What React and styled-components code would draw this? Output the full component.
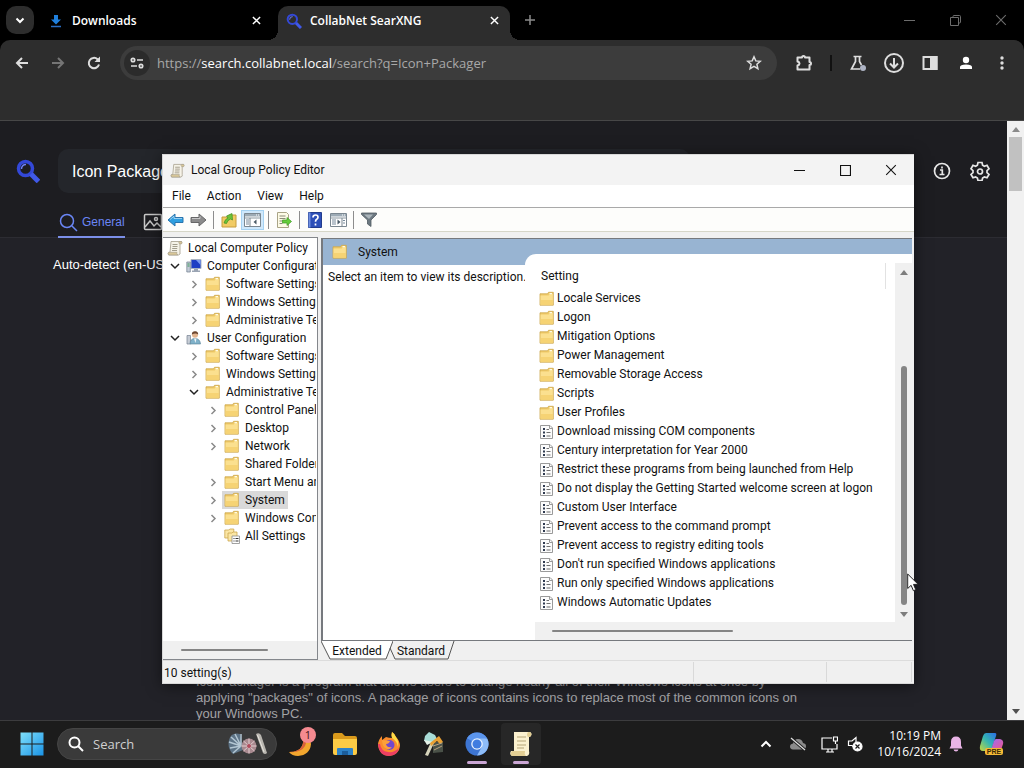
import React from "react";
import styled, { createGlobalStyle, css } from "styled-components";

const UI = `"Open Sans", "Noto Sans", sans-serif`;
const NARROW = `Roboto, "Open Sans", sans-serif`;
const WEB = `"Liberation Sans", Arial, sans-serif`;

const GlobalStyle = createGlobalStyle`
  * { box-sizing: border-box; }
  html, body, #root { height: 100%; }
  body { margin: 0; background: #000; font: 12px/16px ${UI}; overflow: hidden; }
  button, input { font: inherit; color: inherit; border: 0; background: none; padding: 0; margin: 0; outline: 0; }
  ul { list-style: none; margin: 0; padding: 0; }
  svg { display: block; flex: none; }
  p, h1, h2 { margin: 0; font: inherit; }
`;

const Desktop = styled.div`
  position: relative;
  display: flex;
  flex-direction: column;
  height: 100vh;
  overflow: hidden;
`;

/* ---------- browser chrome ---------- */

const TabStrip = styled.div`
  display: flex;
  height: 40px;
  padding-left: 6px;
  background: #000;
  color: #fff;
`;

const TabSearch = styled.button`
  display: grid;
  place-items: center;
  width: 28px;
  height: 28px;
  margin: 6px 8px 0 0;
  border-radius: 10px;
  background: #2d2d2d;
`;

const Tab = styled.div`
  position: relative;
  display: flex;
  align-items: center;
  gap: ${(p) => (p.$active ? 8 : 10)}px;
  width: ${(p) => (p.$active ? 232 : 236)}px;
  height: 34px;
  margin-top: 6px;
  padding: ${(p) => (p.$active ? "0 8px 5px" : "0 14px 5px 8px")};
  border-radius: 10px 10px 0 0;
  font-weight: 600;
  ${(p) =>
    p.$active &&
    css`
      background: #2d2d2d;
      &::before,
      &::after {
        content: "";
        position: absolute;
        bottom: 0;
        width: 10px;
        height: 10px;
      }
      &::before {
        right: 100%;
        background: radial-gradient(circle at 0 0, transparent 10px, #2d2d2d 10px);
      }
      &::after {
        left: 100%;
        background: radial-gradient(circle at 100% 0, transparent 10px, #2d2d2d 10px);
      }
    `}
`;

const TabTitle = styled.span`
  flex: 1;
  white-space: nowrap;
`;

const SmallButton = styled.button`
  display: grid;
  place-items: center;
  width: 16px;
  height: 16px;
`;

const NewTab = styled(SmallButton)`
  width: 28px;
  height: 28px;
  margin: 6px auto 0 6px;
  color: #8a8a8a;
`;

const CaptionButton = styled.button`
  display: grid;
  place-items: center;
  width: 46px;
  height: 100%;
`;

const CaptionGroup = styled.div`
  display: flex;
  height: 100%;
  color: ${(p) => p.$color};
`;

const BrowserBar = styled.div`
  background: #000;
`;

const BrowserToolbar = styled.div`
  display: flex;
  align-items: center;
  height: 46px;
  padding: 0 4px;
  border-radius: 10px 10px 0 0;
  background: #2d2d2d;
  color: #dedede;
`;

const ToolButton = styled.button`
  display: grid;
  place-items: center;
  width: 36px;
  height: 34px;
  color: ${(p) => (p.$dim ? "#757575" : "inherit")};
`;

const BarDivider = styled.span`
  width: 2px;
  height: 16px;
  margin: 0 8px;
  background: #111;
`;

const AddressBar = styled.div`
  display: flex;
  flex: 1;
  align-items: center;
  gap: 7px;
  height: 34px;
  margin: 0 9px 0 8px;
  padding: 0 15px 0 4px;
  border-radius: 17px;
  background: #3c3c3c;
`;

const SiteInfo = styled.button`
  display: grid;
  place-items: center;
  width: 26px;
  height: 26px;
  border-radius: 13px;
  background: #2b2b2b;
`;

const Address = styled.div`
  flex: 1;
  font-size: 13px;
  line-height: 20px;
  color: #a8a8a8;
  white-space: nowrap;
  outline: 0;
  strong { font-weight: 400; color: #fff; }
`;

const BookmarkBar = styled.div`
  height: 35px;
  background: #2d2d2d;
  border-bottom: 1px solid #474747;
`;

/* ---------- web page ---------- */

const Viewport = styled.div`
  display: flex;
  flex: 1;
  min-height: 0;
`;

const WebPage = styled.main`
  display: flex;
  flex: 1;
  flex-direction: column;
  min-width: 0;
  background: #222228;
  color: #fff;
  font-family: ${WEB};
`;

const PageHeader = styled.header`
  background: #1d1d21;
  border-bottom: 1px solid #2c2c32;
`;

const SearchRow = styled.div`
  display: flex;
  align-items: center;
  padding: 28px 17px 0 16px;
`;

const QueryInput = styled.input`
  flex: 0 1 632px;
  min-width: 0;
  height: 44px;
  margin: 0 auto 0 18px;
  padding: 1px 14px 0;
  border-radius: 10px;
  background: #24262b;
  color: #fff;
  font: 16px/20px ${WEB};
`;

const HeaderLink = styled.a`
  margin-left: 18px;
  color: #e6e6e6;
`;

const Categories = styled.nav`
  display: flex;
  gap: 18px;
  height: 44px;
  padding: 14px 0 0 58px;
`;

const Category = styled.a`
  display: flex;
  align-items: center;
  gap: 4px;
  height: 31px;
  color: ${(p) => (p.$active ? "#6a86f5" : "#c8c8c8")};
  border-bottom: 2px solid ${(p) => (p.$active ? "#7b8fe8" : "transparent")};
  font-size: 12px;
  text-decoration: none;
`;

const Filters = styled.div`
  flex: 1;
  padding: 17px 53px;
  font-size: 13px;
  line-height: 20px;
`;

const Result = styled.p`
  width: 620px;
  margin: 0 0 -2px 196px;
  color: #a3a3a6;
  font-size: 13px;
  line-height: 16px;
  white-space: nowrap;
`;

const PageScroll = styled.div`
  display: flex;
  flex-direction: column;
  align-items: center;
  width: 17px;
  padding: 6px 0;
  background: #f1f1f1;
`;

const PageThumb = styled.span`
  flex: none;
  width: 13px;
  height: 54px;
  margin: 5px 0 auto;
  background: #c1c1c1;
`;

const Triangle = styled.span`
  border: 4px solid transparent;
  border-${(p) => (p.$down ? "top" : "bottom")}: 5px solid ${(p) => p.$color};
  border-${(p) => (p.$down ? "bottom" : "top")}: 0;
`;

/* ---------- policy editor window ---------- */

const Window = styled.section`
  position: absolute;
  left: 162px;
  top: 154px;
  display: flex;
  flex-direction: column;
  width: 752px;
  height: 530px;
  border: 1px solid #d8d8d8;
  border-right-width: 0;
  background: #f0f0f0;
  color: #111;
  font-family: ${NARROW};
  box-shadow: 0 2px 14px rgba(0, 0, 0, 0.5);
`;

const TitleBar = styled.header`
  display: flex;
  align-items: center;
  gap: 6px;
  height: 30px;
  padding-left: 7px;
  background: #f3f3f3;
`;

const Title = styled.h1`
  flex: 1;
`;

const MenuBar = styled.nav`
  display: flex;
  gap: 16px;
  height: 23px;
  padding-left: 9px;
  background: #fff;
  border-bottom: 1px solid #a9a9a9;
`;

const IconBar = styled.div`
  display: flex;
  align-items: center;
  gap: 5px;
  height: 24px;
  padding-left: 3px;
  background: #fdfdfb;
  border-bottom: 1px solid #d6d6c8;
`;

const IconButton = styled.button`
  display: grid;
  place-items: center;
  width: 18px;
  height: 20px;
  ${(p) =>
    p.$on &&
    css`
      width: 23px;
      margin: 0 -2px;
      background: #cfe8fb;
      border: 1px solid #a5d2f2;
    `}
`;

const IconDivider = styled.span`
  width: 1px;
  height: 18px;
  margin: 0 1px;
  background: #8d8d8d;
`;

const Panes = styled.div`
  display: flex;
  flex: 1;
  gap: 3px;
  min-height: 0;
  padding: 5px 2px 0 0;
`;

const TreePane = styled.div`
  display: flex;
  flex-direction: column;
  width: 155px;
  border: 1px solid #84878c;
  border-left: 0;
  background: #fff;
`;

const Tree = styled.ul`
  flex: 1;
  min-height: 0;
  margin-right: 1px;
  padding-top: 1px;
  overflow: hidden;
`;

const TreeItem = styled.li`
  display: flex;
  height: 18px;
  padding-left: ${(p) => (p.$level ? p.$level * 19 - 16 : 2)}px;
`;

const Twisty = styled.button`
  display: grid;
  place-items: center;
  flex: none;
  width: 18px;
  color: ${(p) => (p.$open ? "#222" : "#8a8a8a")};
`;

const TreeLabel = styled.button`
  display: flex;
  align-items: center;
  gap: 5px;
  padding: 0 3px 0 2px;
  background: ${(p) => (p.$selected ? "#d9d9d9" : "none")};
  line-height: 18px;
  white-space: nowrap;
`;

const HScroll = styled.div`
  display: flex;
  align-items: center;
  flex: none;
  height: 18px;
  padding-left: ${(p) => p.$offset}px;
  background: #f0f0f0;
`;

const HThumb = styled.span`
  width: ${(p) => p.$size}px;
  height: 2px;
  border-radius: 1px;
  background: #858585;
`;

const DetailPane = styled.div`
  display: flex;
  flex: 1;
  flex-direction: column;
  min-width: 0;
  padding-top: 1px;
`;

const DetailBody = styled.div`
  display: flex;
  flex: 1;
  min-height: 0;
  border: solid #76797e;
  border-width: 1px 0 1px 2px;
  background: #98b4d2;
`;

const InfoColumn = styled.div`
  display: flex;
  flex-direction: column;
  width: 202px;
`;

const InfoHead = styled.h2`
  display: flex;
  align-items: center;
  gap: 10px;
  height: 26px;
  padding-left: 9px;
`;

const InfoText = styled.p`
  flex: 1;
  padding: 4px 0 0 5px;
  background: #fff;
  white-space: nowrap;
`;

const ListColumn = styled.div`
  display: flex;
  flex: 1;
  flex-direction: column;
  min-width: 0;
  margin-top: 15px;
  padding: 9px 0 0 10px;
  border-top-left-radius: 11px;
  background: #fff;
`;

const ListArea = styled.div`
  display: flex;
  flex: 1;
  min-height: 0;
`;

const SettingTable = styled.table`
  flex: 1;
  display: block;
  border-collapse: collapse;
  th {
    width: 350px;
    height: 26px;
    padding: 0 0 0 6px;
    border-right: 1px solid #e2e2e2;
    font-weight: 400;
    text-align: left;
  }
  td { height: 19px; padding: 0 0 0 4px; }
`;

const SettingName = styled.span`
  display: flex;
  align-items: center;
  gap: 2px;
  height: 19px;
  line-height: 19px;
  white-space: nowrap;
`;

const VScroll = styled.div`
  display: flex;
  flex-direction: column;
  align-items: center;
  width: 17px;
  padding: 7px 0 5px;
  background: #f0f0f0;
`;

const VThumb = styled.span`
  width: 6px;
  height: 239px;
  margin: auto 0 7px;
  border-radius: 3px;
  background: #858585;
`;

const ViewTabs = styled.div`
  display: flex;
  height: 19px;
`;

const ViewTab = styled.button`
  position: relative;
  width: ${(p) => p.$width}px;
  height: 19px;
  margin-right: -6px;
  line-height: 20px;
  text-align: center;
  svg { position: absolute; inset: 0; }
  span { position: relative; }
`;

const StatusBar = styled.footer`
  display: flex;
  height: 23px;
  padding: 1px 2px 1px 1px;
  border-top: 1px solid #dcdcdc;
`;

const StatusCell = styled.span`
  flex: ${(p) => (p.$size ? `0 0 ${p.$size}px` : 1)};
  border-right: 1px solid #d9d9d9;
  line-height: 22px;
`;

const Pointer = styled.svg`
  position: absolute;
  left: 907px;
  top: 573px;
`;

/* ---------- taskbar ---------- */

const Taskbar = styled.footer`
  display: flex;
  align-items: center;
  flex: none;
  height: 48px;
  padding: 0 11px 1px 12px;
  border-top: 1px solid #3c3c3e;
  background: #1c1c1c;
  color: #fff;
`;

const StartButton = styled.button`
  display: grid;
  place-items: center;
  width: 40px;
  height: 40px;
  margin-right: 5px;
`;

const TaskSearch = styled.label`
  display: flex;
  align-items: center;
  gap: 9px;
  width: 220px;
  height: 32px;
  margin-right: 2px;
  padding: 0 8px 0 10px;
  border: 1px solid #454545;
  border-radius: 16px;
  background: #3a3a3a;
  input { flex: 1; min-width: 0; font-size: 13px; line-height: 20px; }
  input::placeholder { color: #d0d0d0; opacity: 1; }
`;

const TaskButton = styled.button`
  position: relative;
  display: grid;
  place-items: center;
  width: 44px;
  height: 42px;
  ${(p) => p.$active && css`
    width: 40px;
    margin-left: 2px;
    border-radius: 4px;
    background: #272727;
  `}
  ${(p) => p.$line && css`
    &::after {
      content: "";
      position: absolute;
      bottom: 1px;
      left: calc(50% - ${p.$line / 2}px);
      width: ${p.$line}px;
      height: 3px;
      border-radius: 2px;
      background: #caa6d4;
    }
  `}
`;

const Badge = styled.span`
  position: absolute;
  right: 7px;
  top: 4px;
  width: 16px;
  height: 16px;
  border-radius: 8px;
  background: #f58a90;
  color: #40151a;
  font-size: 11px;
  line-height: 16px;
`;

const Tray = styled.div`
  display: flex;
  align-items: center;
  margin-left: auto;
`;

const TrayButton = styled.button`
  display: grid;
  place-items: center;
  width: ${(p) => p.$width}px;
  height: 40px;
`;

const Clock = styled.button`
  width: 75px;
  font-size: 12px;
  line-height: 16px;
  text-align: right;
  white-space: nowrap;
`;

/* ---------- icons ---------- */

const Stroke = ({ size = 16, w = 2, children, box = size, fill = "none" }) => (
  <svg width={size} height={size} viewBox={`0 0 ${box} ${box}`} fill={fill} stroke="currentColor" strokeWidth={w} aria-hidden="true">
    {children}
  </svg>
);

const Folder = () => (
  <svg width="16" height="16" viewBox="0 0 16 16" aria-hidden="true">
    <path d="M1 2.800h7.500l1-1.500h4.800v12.900H1z" fill="#efca68" stroke="#cda74d" strokeWidth=".8" />
    <path d="M1.500 4.500h8.200l1.300-1.700h2.800v11H1.500z" fill="#fbe08f" />
    <path d="M10.500 2h2.500v1.200h-2.500z" fill="#fffbe8" />
    <path d="M2 9h11.800v4.800H2z" fill="#f4cd68" opacity=".7" />
  </svg>
);

const Policy = () => (
  <svg width="16" height="16" viewBox="0 0 16 16" aria-hidden="true">
    <path d="M1.500 1.500h9.500l2.500 2.500v10.500h-12z" fill="#fcfcfc" stroke="#9a9a9a" />
    <path d="M10.500 1.500v3h3" fill="none" stroke="#9a9a9a" />
    <path d="M4 4h2v2H4zM4 7.500h2v2H4zM4 11h2v2H4z" fill="#2f3a50" />
    <path d="M7.500 5.500h2.500M7.500 8.500h4M7.500 12h4" stroke="#707070" />
  </svg>
);

const Scroll = ({ size = 16, paper = "#f6f3e8" }) => (
  <svg width={size} height={size} viewBox="0 0 16 16" aria-hidden="true">
    <path d="M4 1.500h10.500q1 2-1.500 2.300V12q.8 2.500-1.500 3H1.500Q0 12.500 3 12z" fill={paper} stroke="#a39c8a" strokeWidth=".8" />
    <path d="M12.500 1.500q-1.500 1 0 2.400h2q1.300-1 0-2.400zM1.500 12.300H10q-.8 1.500.8 2.700H2q-1.500-1.300-.5-2.700z" fill="#d9c798" stroke="#a39c8a" strokeWidth=".6" />
    <path d="M5.500 4.500h5M5.500 6.500h5M5.200 8.500h5M5 10.500h5" stroke="#8d8674" strokeWidth=".8" />
  </svg>
);

const Computer = () => (
  <svg width="16" height="16" viewBox="0 0 16 16" aria-hidden="true">
    <path d="M5 1.500h10v9H5z" fill="#1f3fc4" stroke="#a9b3c2" />
    <path d="M10 2h4.500v5z" fill="#7d9cf0" />
    <path d="M.8 4h3.500v10H.8z" fill="#c3cbd6" stroke="#6f7c8e" strokeWidth=".7" />
    <path d="M1.500 6h2M1.500 8h2" stroke="#3b9a5a" />
    <path d="M8 11h4v1.500h2V14H6v-1.500h2z" fill="#9aa4b3" />
  </svg>
);

const UserIcon = () => (
  <svg width="16" height="16" viewBox="0 0 16 16" aria-hidden="true">
    <path d="M1 5.500h3.500v8.500H1z" fill="#c6ccd5" stroke="#748091" strokeWidth=".7" />
    <path d="M4 14q0-5.500 5-5.500t5.500 5.500z" fill="#7fb1c9" stroke="#557f96" strokeWidth=".6" />
    <path d="M8 8.500h2.500L9.500 13z" fill="#eef3f6" />
    <circle cx="9" cy="4.800" r="3" fill="#e2b48f" />
    <path d="M5.800 4.500Q6 1 9.300 1.200q3 .2 2.900 3.300-2.500-1.800-6.400 0z" fill="#6b4630" />
  </svg>
);

const AllSettings = () => (
  <svg width="16" height="16" viewBox="0 0 16 16" aria-hidden="true">
    <path d="M.8 2h4l1-1h4v9h-9z" fill="#fbe6a5" stroke="#cba64e" strokeWidth=".8" />
    <path d="M4 5h4l1-1h4v9H4z" fill="#fbe6a5" stroke="#cba64e" strokeWidth=".8" />
    <path d="M8 8h7.500v7.500H8z" fill="#fff" stroke="#8a8a8a" strokeWidth=".8" />
    <path d="M9.500 10.500h1M11.500 10.500h3M9.500 13h1M11.500 13h3" stroke="#333" />
  </svg>
);

const Chevron = ({ open }) => (
  <Stroke size={10} w={1.500}>
    <path d={open ? "M1 3l4 4 4-4" : "M3.500 2L7 5.500 3.500 9"} />
  </Stroke>
);

const Magnifier = ({ size, w }) => (
  <svg width={size} height={size} viewBox="0 0 24 24" fill="none" aria-hidden="true">
    <circle cx="9.500" cy="9.500" r="7" stroke="#3348d8" strokeWidth={w} />
    <path d="M5.500 10a4.300 4.300 0 0 1 4.500-4.500" stroke="#6d80f2" strokeWidth="1.500" />
    <path d="M15 15l7.500 7.500" stroke="#4059e8" strokeWidth={w + 1.500} />
  </svg>
);

const CloseIcon = ({ size = 10, w = 1.600 }) => (
  <Stroke size={size} box={10} w={w}><path d="M1 1l8 8M9 1L1 9" /></Stroke>
);

const BackArrow = () => (
  <svg width="17" height="16" viewBox="0 0 17 16" aria-hidden="true">
    <path d="M1 8l7-6v3.500h8v5H8V14z" fill="#2f9fe0" stroke="#2a74ad" />
    <path d="M3 7.600l4-3.400v2.300h8" fill="none" stroke="#fff" opacity=".5" />
  </svg>
);

const ForwardArrow = () => (
  <svg width="17" height="16" viewBox="0 0 17 16" aria-hidden="true">
    <path d="M16 8L9 2v3.500H1v5h8V14z" fill="#8b8b8b" stroke="#666" />
    <path d="M2 6.500h8V4.200" fill="none" stroke="#fff" opacity=".5" />
  </svg>
);

const ConsoleIcon = ({ mirror }) => (
  <svg width="17" height="15" viewBox="0 0 17 15" aria-hidden="true">
    <path d="M.5 1.500h16v13H.5z" fill="#fff" stroke="#7b8790" />
    <path d="M1 2h15v2.500H1z" fill="#9dabb5" />
    <path d="M12 3h1M14 3h1" stroke="#fff" />
    <path d="M1 6h15" stroke="#8a979f" />
    <path d={mirror ? "M12 6v8" : "M6 6v8"} stroke="#7b8790" />
    <path d={mirror ? "M13 8.500h2M13 11h2M2 8h4M2 10h4M2 12h4" : "M2 8h3M2 10h3M2 12h3"} stroke="#76899a" />
    <path d={mirror ? "M7.500 7.500v5l3-2.500z" : "M12.500 7.500v5l-3-2.500z"} fill="#4a5a66" />
  </svg>
);

/* ---------- data ---------- */

const treeItems = [
  [0, "Local Computer Policy", null, Scroll],
  [1, "Computer Configuration", "open", Computer],
  [2, "Software Settings", "closed"],
  [2, "Windows Settings", "closed"],
  [2, "Administrative Templates", "closed"],
  [1, "User Configuration", "open", UserIcon],
  [2, "Software Settings", "closed"],
  [2, "Windows Settings", "closed"],
  [2, "Administrative Templates", "open"],
  [3, "Control Panel", "closed"],
  [3, "Desktop", "closed"],
  [3, "Network", "closed"],
  [3, "Shared Folders", null],
  [3, "Start Menu and Taskbar", "closed"],
  [3, "System", "closed"],
  [3, "Windows Components", "closed"],
  [3, "All Settings", null, AllSettings],
];

const settings = [
  [Folder, "Locale Services"],
  [Folder, "Logon"],
  [Folder, "Mitigation Options"],
  [Folder, "Power Management"],
  [Folder, "Removable Storage Access"],
  [Folder, "Scripts"],
  [Folder, "User Profiles"],
  [Policy, "Download missing COM components"],
  [Policy, "Century interpretation for Year 2000"],
  [Policy, "Restrict these programs from being launched from Help"],
  [Policy, "Do not display the Getting Started welcome screen at logon"],
  [Policy, "Custom User Interface"],
  [Policy, "Prevent access to the command prompt"],
  [Policy, "Prevent access to registry editing tools"],
  [Policy, "Don't run specified Windows applications"],
  [Policy, "Run only specified Windows applications"],
  [Policy, "Windows Automatic Updates"],
];

/* ---------- sections ---------- */

function Captions({ color, restore }) {
  return (
    <CaptionGroup $color={color}>
      <CaptionButton aria-label="Minimize"><Stroke size={11} w={1}><path d="M0 5.500h11" /></Stroke></CaptionButton>
      <CaptionButton aria-label={restore ? "Restore" : "Maximize"}>
        <Stroke size={11} w={1}>
          {restore ? <path d="M.5 2.500h8v8h-8zM3 2.500v-1Q3 .5 4 .5h5.500q1 0 1 1V7q0 1-1 1h-1" /> : <path d="M.5 .5h10v10H.5z" strokeWidth="1.200" />}
        </Stroke>
      </CaptionButton>
      <CaptionButton aria-label="Close"><CloseIcon size={12} w={0.900} /></CaptionButton>
    </CaptionGroup>
  );
}

function Browser() {
  return (
    <>
      <TabStrip>
        <TabSearch aria-label="Search tabs"><Stroke size={10}><path d="M1.500 3.500L5 7l3.500-3.500" /></Stroke></TabSearch>
        <Tab>
          <svg width="12" height="14" viewBox="0 0 12 14" aria-hidden="true">
            <path d="M4 1h4v4.500h3L6 10.500 1 5.500h3z" fill="#1f7fdc" />
            <path d="M1 12.500h10" stroke="#2a6fc4" strokeWidth="1.500" />
          </svg>
          <TabTitle>Downloads</TabTitle>
          <SmallButton aria-label="Close tab"><CloseIcon size={9} /></SmallButton>
        </Tab>
        <Tab $active>
          <Magnifier size={16} w={3} />
          <TabTitle>CollabNet SearXNG</TabTitle>
          <SmallButton aria-label="Close tab"><CloseIcon size={9} /></SmallButton>
        </Tab>
        <NewTab aria-label="New tab"><Stroke size={10} w={1.500}><path d="M5 0v10M0 5h10" /></Stroke></NewTab>
        <Captions color="#6d6d6d" restore />
      </TabStrip>
      <BrowserBar>
        <BrowserToolbar>
          <ToolButton aria-label="Back"><Stroke size={14}><path d="M13 7H2M7 2L2 7l5 5" /></Stroke></ToolButton>
          <ToolButton aria-label="Forward" $dim><Stroke size={14}><path d="M1 7h11M7 2l5 5-5 5" /></Stroke></ToolButton>
          <ToolButton aria-label="Reload">
            <Stroke size={14}><path d="M12 8.500A5.200 5.200 0 1 1 10.500 3.200L12 5" /><path d="M13 .5V6H7.500z" fill="currentColor" stroke="none" /></Stroke>
          </ToolButton>
          <AddressBar>
            <SiteInfo aria-label="View site information">
              <Stroke size={14} w={1.700}>
                <circle cx="3" cy="4" r="1.700" /><path d="M7 4h6M1 10h6" /><circle cx="11" cy="10" r="1.700" />
              </Stroke>
            </SiteInfo>
            <Address role="textbox" aria-label="Address" tabIndex={0}>
              https://<strong>search.collabnet.local</strong>/search?q=Icon+Packager
            </Address>
            <SmallButton aria-label="Bookmark this tab">
              <Stroke size={16} w={1.500}><path d="M8 1.800l1.800 4.100 4.500.4-3.400 3 1 4.400L8 11.400l-3.900 2.300 1-4.400-3.400-3 4.500-.4z" /></Stroke>
            </SmallButton>
          </AddressBar>
          <ToolButton aria-label="Extensions">
            <Stroke size={18} w={2}><path d="M2.500 3.500H7Q7 2 8.500 2t1.500 1.500h4.500V8q1.500 0 1.500 1.500T14.500 11v4.500h-12V11.500Q4.500 11 4.500 9.500T2.500 7.500z" strokeLinejoin="round" /></Stroke>
          </ToolButton>
          <BarDivider />
          <ToolButton aria-label="Experiments">
            <Stroke size={18} w={1.700}>
              <path d="M4.500 2.500h8M6.500 2.500v5L2.500 15H11M10.500 2.500v5l2 3.500" /><circle cx="14" cy="14" r="3" fill="#aeb4c4" stroke="none" />
            </Stroke>
          </ToolButton>
          <ToolButton aria-label="Downloads">
            <Stroke size={20} w={2}><circle cx="10" cy="10" r="9" /><path d="M10 5v9M6 10.500l4 4 4-4" /></Stroke>
          </ToolButton>
          <ToolButton aria-label="Side panel">
            <Stroke size={16} w={2}><path d="M1.500 2h13v12h-13z" /><path d="M9 2h5.500v12H9z" fill="currentColor" /></Stroke>
          </ToolButton>
          <ToolButton aria-label="Profile">
            <Stroke size={14} fill="#fff" w={0}><circle cx="7" cy="4" r="3.200" /><path d="M1 13v-2q0-2.500 6-2.500t6 2.500v2z" /></Stroke>
          </ToolButton>
          <ToolButton aria-label="Menu">
            <Stroke size={16} fill="currentColor" w={0}><circle cx="8" cy="3" r="1.700" /><circle cx="8" cy="8" r="1.700" /><circle cx="8" cy="13" r="1.700" /></Stroke>
          </ToolButton>
        </BrowserToolbar>
        <BookmarkBar />
      </BrowserBar>
      <Viewport>
        <WebPage>
          <PageHeader>
            <SearchRow>
              <Magnifier size={24} w={3.500} />
              <QueryInput aria-label="Search query" defaultValue="Icon Packager" />
              <HeaderLink href="#about" aria-label="About">
                <Stroke size={20} w={1.700}><circle cx="10" cy="10" r="7.500" /><path d="M8 9h2.300v4.500M7.500 13.500h5" /><path d="M10 5.500v2" /></Stroke>
              </HeaderLink>
              <HeaderLink href="#preferences" aria-label="Preferences">
                <Stroke size={20} w={1.700}>
                  <path d="M8 1.500h4l.6 2.700 1.800 1 2.600-.9 2 3.500-2 1.800v2l2 1.800-2 3.400-2.600-.8-1.800 1-.6 2.600H8L7.400 17l-1.800-1-2.600.8-2-3.400 2-1.800v-2L1 7.800l2-3.500 2.600.9 1.800-1z" />
                  <circle cx="10" cy="10.500" r="2.500" />
                </Stroke>
              </HeaderLink>
            </SearchRow>
            <Categories>
              <Category href="#general" $active>
                <Stroke size={20} w={1.500}><circle cx="9" cy="9" r="6.500" /><path d="M14 14l5 5" /></Stroke>
                General
              </Category>
              <Category href="#images" aria-label="Images">
                <Stroke size={20} w={1.500}><rect x="1.500" y="2.500" width="17" height="15" rx="1" /><circle cx="13" cy="7" r="1.500" /><path d="M2 15l5-6 4 5 3-3 4 4" /></Stroke>
              </Category>
            </Categories>
          </PageHeader>
          <Filters>Auto-detect (en-US)</Filters>
          <Result>
            IconPackager is a program that allows users to change nearly all of their Windows icons at once by<br />
            applying "packages" of icons. A package of icons contains icons to replace most of the common icons on<br />
            your Windows PC.
          </Result>
        </WebPage>
        <PageScroll>
          <Triangle $color="#8a8a8a" />
          <PageThumb />
          <Triangle $down $color="#505050" />
        </PageScroll>
      </Viewport>
    </>
  );
}

function PolicyEditor() {
  return (
    <Window aria-label="Local Group Policy Editor">
      <TitleBar>
        <Scroll size={15} />
        <Title>Local Group Policy Editor</Title>
        <Captions color="#111" />
      </TitleBar>
      <MenuBar>
        {["File", "Action", "View", "Help"].map((m) => <button key={m}>{m}</button>)}
      </MenuBar>
      <IconBar>
        <IconButton aria-label="Back"><BackArrow /></IconButton>
        <IconButton aria-label="Forward"><ForwardArrow /></IconButton>
        <IconDivider />
        <IconButton aria-label="Up one level">
          <svg width="16" height="16" viewBox="0 0 16 16" aria-hidden="true">
            <path d="M1 5h6l1.500-2H15v12H1z" fill="#f1cb63" stroke="#c69b3c" />
            <path d="M3 11q1-4 4-5L5.500 4 11 1.500 11.500 8 9.500 7q-3 1-4 4.500z" fill="#6cc339" stroke="#3f8f22" strokeWidth=".7" />
          </svg>
        </IconButton>
        <IconButton aria-label="Show console tree" $on><ConsoleIcon /></IconButton>
        <IconDivider />
        <IconButton aria-label="Export list">
          <svg width="16" height="16" viewBox="0 0 16 16" aria-hidden="true">
            <path d="M1.500.5h9l2 2v13h-11z" fill="#fdfbe6" stroke="#a9a486" />
            <path d="M3.500 4h6M3.500 6.500h6M3.500 9h3M3.500 11.500h3" stroke="#8b8b78" />
            <path d="M6.500 8H11V5.500l4.500 4-4.500 4V11H6.500z" fill="#65cc3b" stroke="#3c9a24" strokeWidth=".7" />
          </svg>
        </IconButton>
        <IconDivider />
        <IconButton aria-label="Help">
          <svg width="14" height="16" viewBox="0 0 14 16" aria-hidden="true">
            <path d="M.5.5h13v15H.5z" fill="#2d4fb8" stroke="#223c8c" />
            <path d="M.5.5h2v15h-2z" fill="#6f8fe0" />
            <path d="M5 5.500Q5 3 7.500 3T10 5.300q0 1.200-1.300 2Q7.500 8 7.500 9.800M7.500 11.500v2" fill="none" stroke="#fff" strokeWidth="1.700" />
          </svg>
        </IconButton>
        <IconButton aria-label="Show action pane"><ConsoleIcon mirror /></IconButton>
        <IconDivider />
        <IconButton aria-label="Filter">
          <svg width="16" height="15" viewBox="0 0 16 15" aria-hidden="true">
            <path d="M.5 1h15v1.500L10 8v6.500L6.500 12V8L.5 2.500z" fill="#6d7981" stroke="#515c63" strokeWidth=".8" />
            <path d="M3 2.500h9L8 7z" fill="#aab4ba" />
          </svg>
        </IconButton>
      </IconBar>
      <Panes>
        <TreePane>
          <Tree>
            {treeItems.map(([level, name, state, Icon = Folder], i) => (
              <TreeItem key={i} $level={level}>
                {level > 0 && (
                  <Twisty $open={state === "open"} aria-label={`Toggle ${name}`} disabled={!state}>
                    {state && <Chevron open={state === "open"} />}
                  </Twisty>
                )}
                <TreeLabel $selected={name === "System"}><Icon />{name}</TreeLabel>
              </TreeItem>
            ))}
          </Tree>
          <HScroll $offset={18}><HThumb $size={87} /></HScroll>
        </TreePane>
        <DetailPane>
          <DetailBody>
            <InfoColumn>
              <InfoHead><Folder />System</InfoHead>
              <InfoText>Select an item to view its description.</InfoText>
            </InfoColumn>
            <ListColumn>
              <ListArea>
                <SettingTable>
                  <thead><tr><th>Setting</th></tr></thead>
                  <tbody>
                    {settings.map(([Icon, name]) => (
                      <tr key={name}><td><SettingName><Icon />{name}</SettingName></td></tr>
                    ))}
                  </tbody>
                </SettingTable>
                <VScroll>
                  <Triangle $color="#7d7d7d" />
                  <VThumb />
                  <Triangle $down $color="#7d7d7d" />
                </VScroll>
              </ListArea>
              <HScroll $offset={17}><HThumb $size={181} /></HScroll>
            </ListColumn>
          </DetailBody>
          <ViewTabs>
            <ViewTab $width={72}>
              <svg width="72" height="19" viewBox="0 0 72 19" aria-hidden="true"><path d="M0 0l9 18h56l7-18" fill="#fff" stroke="#555" /></svg>
              <span>Extended</span>
            </ViewTab>
            <ViewTab $width={68}>
              <svg width="68" height="19" viewBox="0 0 68 19" aria-hidden="true"><path d="M3 7l5 11h53l6-18" fill="none" stroke="#555" /></svg>
              <span>Standard</span>
            </ViewTab>
          </ViewTabs>
        </DetailPane>
      </Panes>
      <StatusBar>
        <StatusCell>10 setting(s)</StatusCell>
        <StatusCell $size={133} />
        <StatusCell $size={85} />
      </StatusBar>
    </Window>
  );
}

function SystemTaskbar() {
  return (
    <Taskbar>
      <StartButton aria-label="Start">
        <svg width="24" height="24" viewBox="0 0 24 24" aria-hidden="true">
          <defs><linearGradient id="win" x1="0" y1="0" x2="1" y2="1"><stop stopColor="#7fe0fb" /><stop offset="1" stopColor="#1a93e6" /></linearGradient></defs>
          <path d="M.5.500h11v11H.5zM12.500.500h11v11h-11zM.5 12.500h11v11H.5zM12.500 12.500h11v11h-11z" fill="url(#win)" />
        </svg>
      </StartButton>
      <TaskSearch>
        <Stroke size={16} w={2}><circle cx="6.500" cy="6.500" r="5" /><path d="M10 10l5 5" /></Stroke>
        <input aria-label="Search" placeholder="Search" />
        <svg width="40" height="24" viewBox="0 0 40 24" aria-hidden="true">
          <path d="M12 2q-9-2-11 6t4 14l10-4z" fill="#5d7386" />
          <path d="M13 14L3 5M13 14L1 10M13 14L2 16M13 14L7 2M13 14L5 21M13 14l0-12" stroke="#b3c6d3" strokeWidth="1.500" />
          <circle cx="21" cy="14" r="7.500" fill="#a8898f" />
          <path d="M21 6.500v15M13.500 14h15M15.500 9l11 10M26.500 9l-11 10" stroke="#e5cdd0" />
          <circle cx="21" cy="14" r="2" fill="#b04a5c" />
          <path d="M28 2q3-2 5 1l6 18q-2 2-4 0z" fill="#b9b6b0" />
          <path d="M29.500 3l6.500 17" stroke="#e8e5de" />
        </svg>
      </TaskSearch>
      <TaskButton aria-label="Weather alert">
        <svg width="24" height="30" viewBox="0 0 24 30" aria-hidden="true">
          <path d="M14 6q8 1 8 9-1 11-13 12-6 0-9-4 10 0 13-6 2-4 1-11z" fill="#f2a62e" />
          <path d="M14 6q5 4 2 11-4 7-16 6 10 0 13-6 2-4 1-11z" fill="#d9603a" />
        </svg>
        <Badge>1</Badge>
      </TaskButton>
      <TaskButton aria-label="File Explorer">
        <svg width="26" height="24" viewBox="0 0 26 24" aria-hidden="true">
          <path d="M1 3q0-2 2-2h7l3 3h10q2 0 2 2v4H1z" fill="#d99a1c" />
          <path d="M1 7h24v14q0 2-2 2H3q-2 0-2-2z" fill="#fccb45" />
          <path d="M5 23v-6q0-1 1-1h14q1 0 1 1v6z" fill="#2d82c8" /><path d="M10 19h6v4h-6z" fill="#1b5d9b" />
        </svg>
      </TaskButton>
      <TaskButton aria-label="Firefox">
        <svg width="24" height="26" viewBox="0 0 24 26" aria-hidden="true">
          <path d="M15 1q3 2 4 5 4 4 4 9-1 9-11 10Q2 24 1 14q0-5 4-9v4l4-3q3 1 6 1-1-3 0-6z" fill="#fa8c2d" />
          <path d="M1 13q1 12 11 12 9-1 10-8-5 5-11 4-7-1-8-8z" fill="#ed3f62" />
          <path d="M15 1q3 2 4 5 3 4 2 10-1-6-6-9-1-3 0-6z" fill="#fedb45" />
          <circle cx="12.500" cy="14" r="5" fill="#7348cc" />
          <path d="M5 9l8 1q-1 3-4 3 1 4 6 3-3 4-7 1-3-3-3-8z" fill="#fca13a" />
        </svg>
      </TaskButton>
      <TaskButton aria-label="Editor">
        <svg width="24" height="26" viewBox="0 0 24 26" aria-hidden="true">
          <path d="M12 11l10 0v10l-10 1z" fill="#4a5148" />
          <path d="M4 5l4-4 6 3 2 4-6 4-7-2z" fill="#a9ddd7" />
          <path d="M3 9l9 2-6 3z" fill="#e5f2e8" />
          <path d="M4 24l6-13 3 1-6 13z" fill="#d6d4bb" />
          <path d="M9 12l9-7 4 6-3 2-3-3-6 5z" fill="#e9a033" />
          <path d="M12 15l9-3M13 19l8-4" stroke="#b9a27e" />
        </svg>
      </TaskButton>
      <TaskButton aria-label="Chromium" $line={20}>
        <svg width="24" height="24" viewBox="0 0 24 24" aria-hidden="true">
          <circle cx="12" cy="12" r="11.500" fill="#3d75d2" />
          <path d="M12 12L2 6.300A11.500 11.500 0 0 1 22 6.300z" fill="#5b95ec" />
          <path d="M12 6.500h10.200A11.500 11.500 0 0 1 12 23.500l5-9z" fill="#8dbcf8" />
          <circle cx="12" cy="12" r="5.800" fill="#e8f2ff" /><circle cx="12" cy="12" r="4.500" fill="#3f7ce0" />
        </svg>
      </TaskButton>
      <TaskButton aria-label="Local Group Policy Editor" $active $line={16}>
        <svg width="24" height="26" viewBox="0 0 24 26" aria-hidden="true">
          <path d="M5 1h16q3 2 0 5h-1v14q1 4-2 5H3q-3-2-1-5h3z" fill="#fbf1cf" />
          <path d="M19 1h2q3 2 0 5h-2q-2-2 0-5zM3 20h13q-1 3 1 5H3q-3-2 0-5z" fill="#e3cf94" />
          <path d="M8 6h9M8 10h9M8 14h9M8 17h7" stroke="#cdbf95" strokeWidth="1.500" />
        </svg>
      </TaskButton>
      <Tray>
        <TrayButton aria-label="Show hidden icons" $width={32}><Stroke size={12}><path d="M1.500 8.500L6 4l4.500 4.500" /></Stroke></TrayButton>
        <TrayButton aria-label="OneDrive" $width={32}>
          <svg width="18" height="14" viewBox="0 0 18 14" aria-hidden="true">
            <path d="M4 12.500Q1 12 1 9.500T4 6.500Q5 2 9 2t5 4q3 .5 3 3.300T14 12.500z" fill="#8b8b8b" />
            <path d="M2 1l14 12" stroke="#1c1c1c" strokeWidth="3" /><path d="M2 1l14 12" stroke="#ddd" strokeWidth="1.300" />
          </svg>
        </TrayButton>
        <TrayButton aria-label="Network" $width={30}>
          <Stroke size={17} w={1.200}><path d="M11 2H1v11h15V8M5 16h8M7 13v3M11 13v3M12.500 1h4v4h-4zM14.500 5v3" /></Stroke>
        </TrayButton>
        <TrayButton aria-label="Volume muted" $width={22}>
          <Stroke size={16} w={1.200}>
            <path d="M9 6V1.500L5 5H1.500v4.500H5L7 11" />
            <circle cx="10.500" cy="10.500" r="4.500" fill="#fff" /><path d="M8.500 8.500l4 4M12.500 8.500l-4 4" stroke="#1c1c1c" />
          </Stroke>
        </TrayButton>
        <Clock>10:19 PM<br />10/16/2024</Clock>
        <TrayButton aria-label="Notifications" $width={30}>
          <svg width="14" height="16" viewBox="0 0 14 16" aria-hidden="true">
            <path d="M7 .5q5 0 5 5.500v3.500l1.500 3H.5l1.500-3V6q0-5.500 5-5.500zM4.500 13.500h5Q9 15.500 7 15.500t-2.500-2z" fill="#e9b4e6" />
          </svg>
        </TrayButton>
        <TrayButton aria-label="Copilot" $width={42}>
          <svg width="26" height="24" viewBox="0 0 26 24" aria-hidden="true">
            <defs>
              <linearGradient id="copilotA" x1="1" y1="0" x2="0" y2="1"><stop stopColor="#2a6ee8" /><stop offset=".5" stopColor="#35b7b0" /><stop offset="1" stopColor="#c9d83b" /></linearGradient>
              <linearGradient id="copilotB" x1="0" y1="0" x2="1" y2="1"><stop stopColor="#9b6cf5" /><stop offset="1" stopColor="#f0568c" /></linearGradient>
            </defs>
            <path d="M7 1h9q2 0 1 3l-4 12q-1 3-4 3H4q-4 0-3-5L4 4q1-3 3-3z" fill="url(#copilotA)" />
            <path d="M17 7h4q4 1 3 5l-2 6H12l3-9q1-2 2-2z" fill="url(#copilotB)" />
            <rect x="6" y="16" width="18" height="7" rx="2" fill="#f5b935" />
            <text x="15" y="22" textAnchor="middle" fontFamily="Liberation Sans, sans-serif" fontWeight="700" fontSize="7" fill="#3a2a08">PRE</text>
          </svg>
        </TrayButton>
      </Tray>
    </Taskbar>
  );
}

export default function App() {
  return (
    <Desktop>
      <GlobalStyle />
      <Browser />
      <SystemTaskbar />
      <PolicyEditor />
      <Pointer width="12" height="19" viewBox="0 0 12 19" aria-hidden="true">
        <path d="M.7 1v14.500l3.400-3.200 2.300 5.400 2.400-1-2.300-5.300h4.700z" fill="#fff" stroke="#222" />
      </Pointer>
    </Desktop>
  );
}
